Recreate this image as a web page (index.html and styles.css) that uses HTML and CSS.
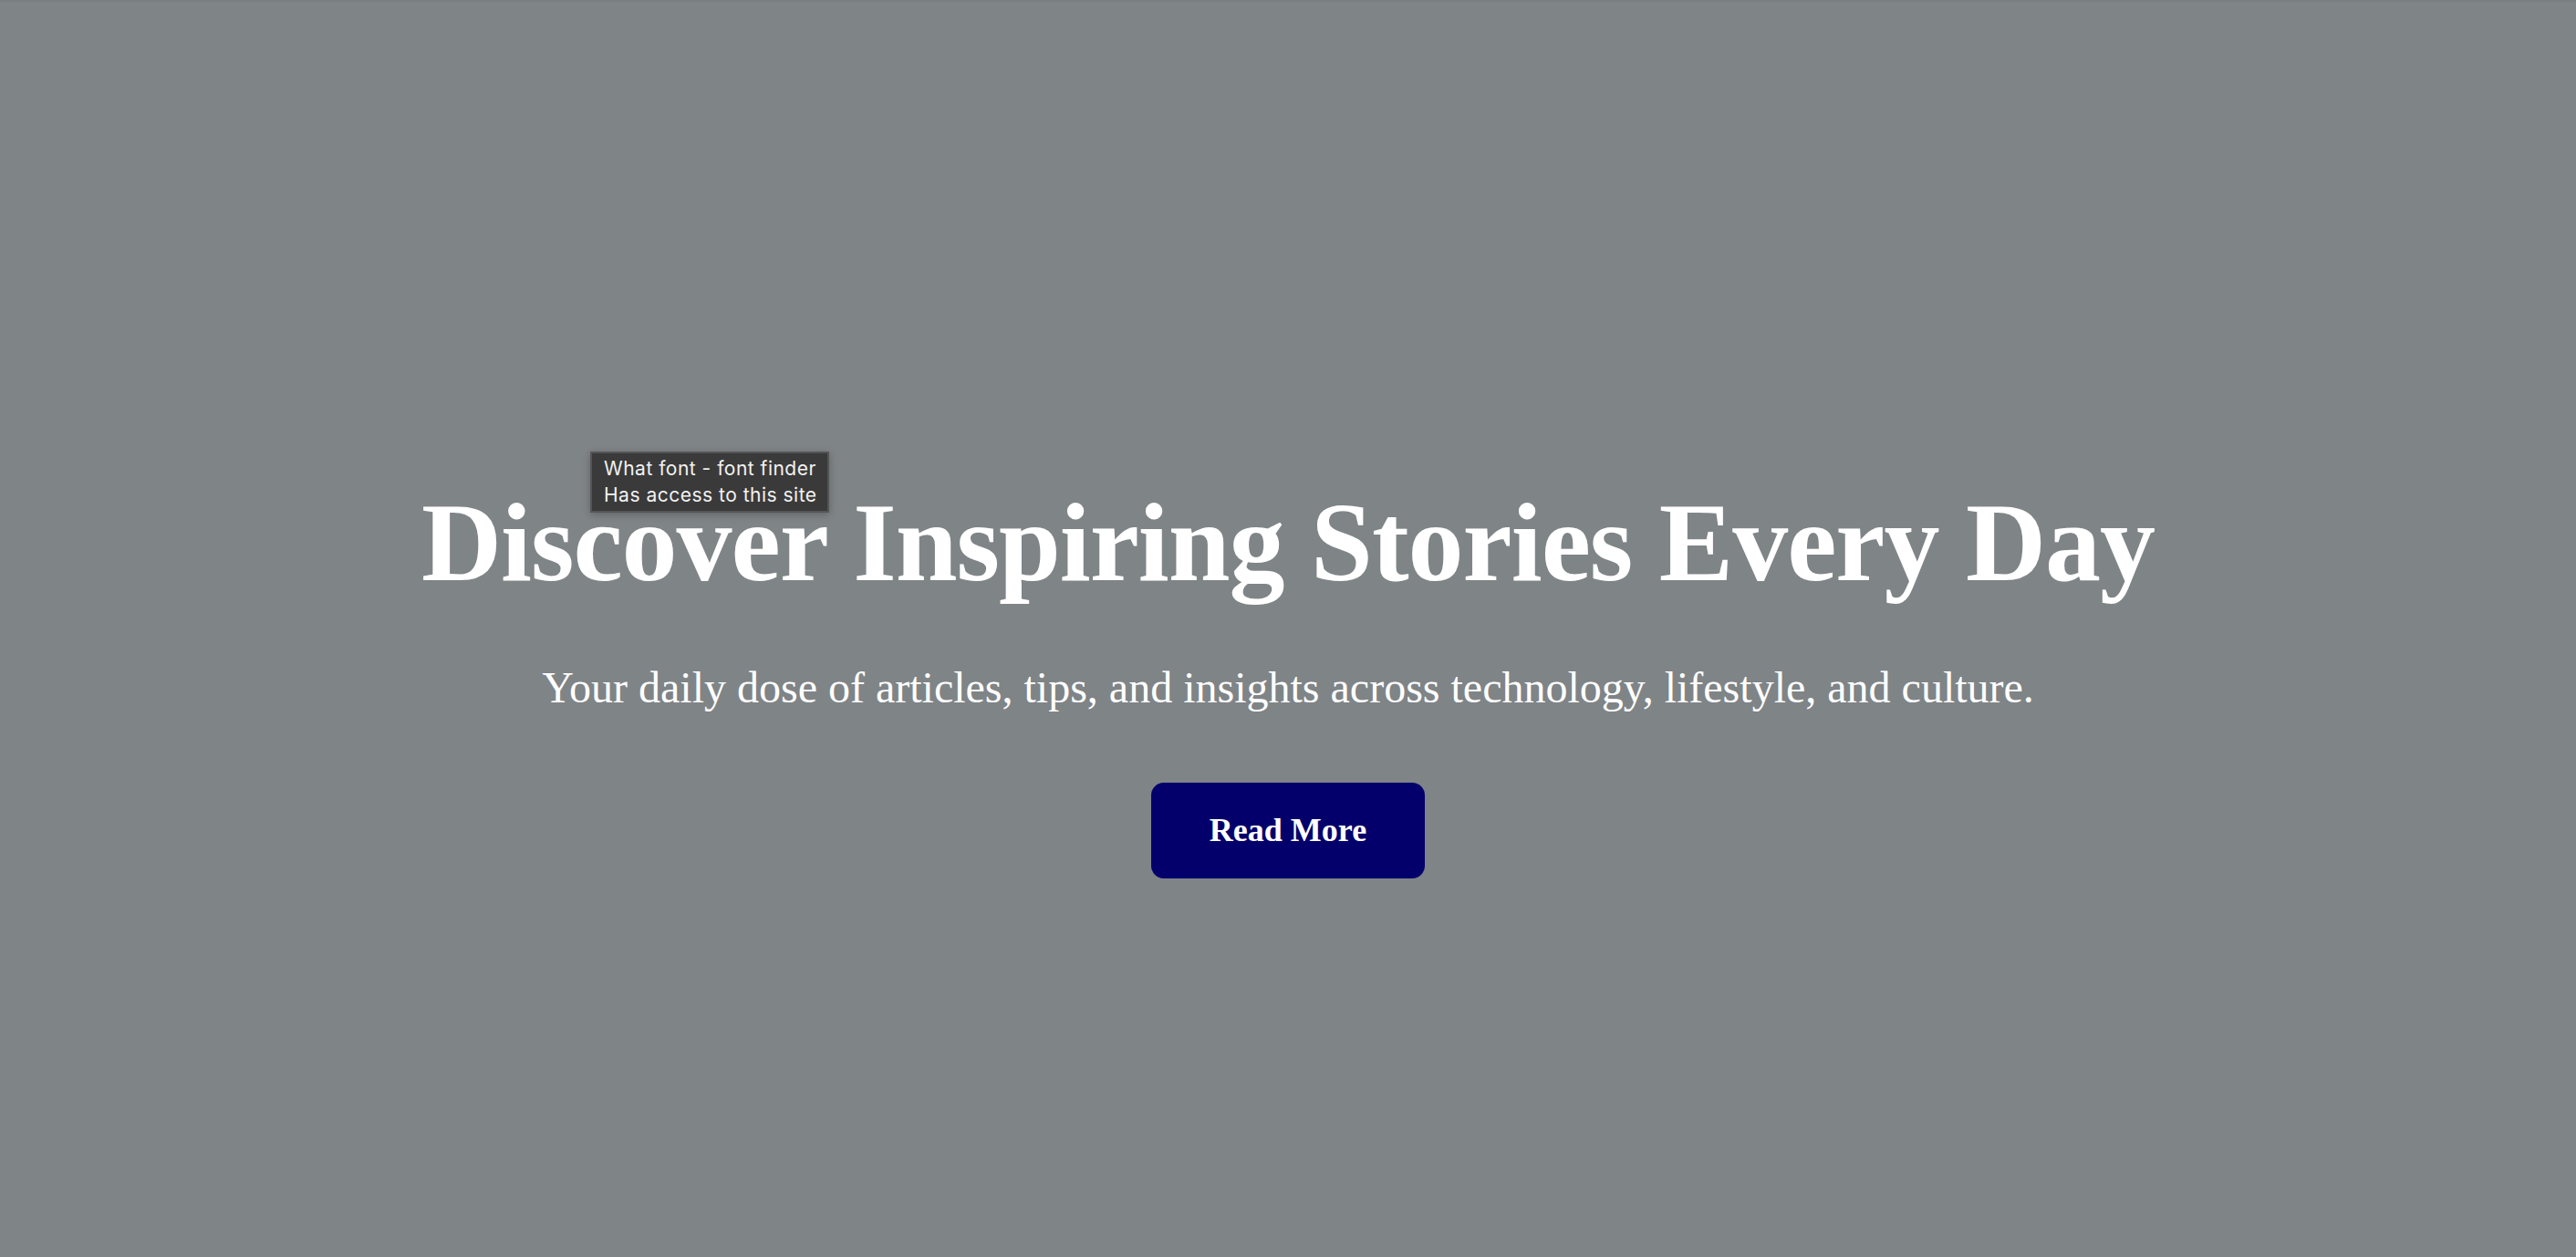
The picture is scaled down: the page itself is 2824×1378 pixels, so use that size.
FILE: index.html
```html
<!DOCTYPE html>
<html lang="en">
<head>
<meta charset="utf-8">
<title>Discover Inspiring Stories Every Day</title>
<link rel="stylesheet" href="styles.css">
</head>
<body>
<section class="hero">
  <h1 class="hero-title">Discover Inspiring Stories Every Day</h1>
  <p class="hero-sub">Your daily dose of articles, tips, and insights across technology, lifestyle, and culture.</p>
  <a class="hero-btn" href="#">Read More</a>
</section>
<div class="ext-tip">
  <div>What font - font finder</div>
  <div>Has access to this site</div>
</div>
</body>
</html>
```
FILE: styles.css
```css
html, body {
  margin: 0;
  padding: 0;
}
body {
  background: #7f8487;
  font-family: "Liberation Serif", "Times New Roman", serif;
  color: #fff;
  overflow: hidden;
}
.hero {
  height: 1378px;
  box-sizing: border-box;
  display: flex;
  flex-direction: column;
  align-items: center;
  padding-top: 520px;
  border-top: 2px solid #797e81;
}
.hero-title {
  margin: 0;
  font-size: 122px;
  font-weight: bold;
  letter-spacing: -1px;
  line-height: 1.2;
}
.hero-sub {
  margin: 57px 0 0;
  font-size: 48px;
  line-height: 1.2;
}
.hero-btn {
  margin-top: 75px;
  width: 300px;
  height: 105px;
  box-sizing: border-box;
  display: flex;
  align-items: center;
  justify-content: center;
  background: #04006b;
  border-radius: 14px;
  color: #fff;
  text-decoration: none;
  font-weight: bold;
  font-size: 36px;
}
.ext-tip {
  position: absolute;
  left: 647px;
  top: 495px;
  width: 262px;
  height: 67px;
  box-sizing: border-box;
  background: #3a3a3a;
  border: 2px solid #555;
  color: #f2f2f2;
  font-family: Inter, "Liberation Sans", sans-serif;
  font-size: 21px;
  letter-spacing: 0.5px;
  line-height: 29px;
  padding: 2px 0 0 13px;
  box-shadow: 0 2px 8px rgba(0,0,0,0.25);
}
```
